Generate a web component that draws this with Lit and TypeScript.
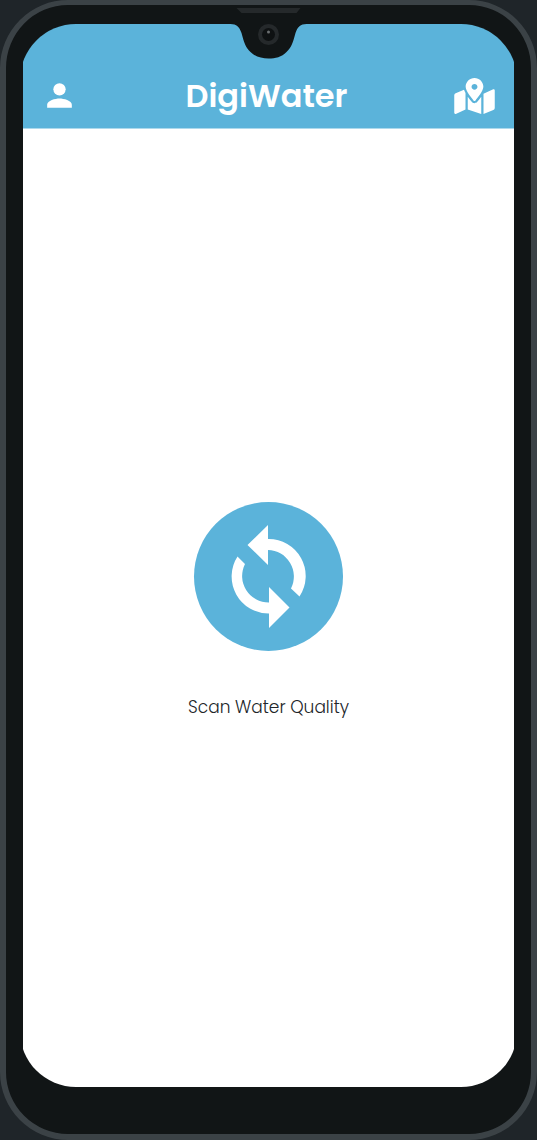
import { LitElement, html, css } from "lit";
import { customElement } from "lit/decorators.js";

@customElement("app-root")
export class AppRoot extends LitElement {
  static styles = css`
    :host {
      display: block;
      min-height: 100vh;
      background: #1f2529;
      font-family: Poppins, Inter, sans-serif;
    }
    * {
      box-sizing: border-box;
    }
    .phone {
      position: relative;
      display: flex;
      min-height: 100vh;
      padding: 19px 17px 47px;
      border: 6px solid #3b4246;
      border-top-width: 5px;
      border-radius: 68px;
      background: #111516;
    }
    .window {
      display: flex;
      flex: 1;
      overflow: hidden;
    }
    .screen {
      display: flex;
      flex: 1;
      flex-direction: column;
      margin: 0 -3px;
      padding: 0 3px;
      overflow: hidden;
      border-radius: 56px;
      background: linear-gradient(#5bb3da 104px, #ffffff 105px);
    }
    .bar {
      display: grid;
      grid-template-columns: 48px 1fr 48px;
      align-items: center;
      height: 104px;
      padding: 40px 16px 0;
      color: #ffffff;
    }
    .title {
      margin: 0;
      padding-right: 4px;
      font-size: 32px;
      font-weight: 600;
      line-height: 48px;
      text-align: center;
    }
    button {
      display: flex;
      align-items: center;
      justify-content: center;
      padding: 0;
      border: 0;
      background: none;
      color: inherit;
      font: inherit;
      cursor: pointer;
    }
    svg {
      display: block;
      fill: currentColor;
    }
    .profile {
      width: 41px;
      height: 50px;
      padding-bottom: 2px;
    }
    .map {
      width: 48px;
      height: 48px;
    }
    .main {
      display: flex;
      flex: 1;
      flex-direction: column;
      align-items: center;
      justify-content: center;
      gap: 44px;
      padding-top: 6px;
    }
    .scan {
      width: 149px;
      height: 149px;
      border-radius: 50%;
      background: #5bb3da;
      color: #ffffff;
    }
    .caption {
      margin: 0;
      color: #212529;
      font-size: 17px;
      font-weight: 300;
      line-height: 24px;
    }
    .notch {
      position: absolute;
      top: 0;
      left: 50%;
      transform: translateX(-50%);
    }
  `;

  render() {
    return html`
      <div class="phone">
        <div class="window">
          <div class="screen">
            <header class="bar">
              <button class="profile" type="button" aria-label="Profile">
                <svg width="37" height="37" viewBox="0 0 24 24">
                  <circle cx="12" cy="8" r="4" />
                  <path d="M12 14c-2.670 0-8 1.340-8 4v2h16v-2c0-2.660-5.330-4-8-4z" />
                </svg>
              </button>
              <h1 class="title">DigiWater</h1>
              <button class="map" type="button" aria-label="Map">
                <svg width="41" height="36" viewBox="0 0 576 512">
                  <path
                    d="M288 0c-69.590 0-126 56.410-126 126 0 56.260 82.350 158.800 113.900 196.020 6.390 7.540 17.820 7.540 24.200 0C331.650 284.800 414 182.260 414 126 414 56.410 357.590 0 288 0zm0 168c-23.200 0-42-18.800-42-42s18.800-42 42-42 42 18.800 42 42-18.800 42-42 42zM20.120 215.950A32.006 32.006 0 0 0 0 245.660v250.320c0 11.320 11.430 19.060 21.940 14.860L160 448V214.920c-8.840-15.980-16.070-31.540-21.250-46.420L20.120 215.950zM288 359.670c-14.070 0-27.380-6.180-36.510-16.960-19.660-23.200-40.570-49.620-59.490-76.720v182l192 64V266c-18.920 27.090-39.820 53.520-59.490 76.720-9.130 10.770-22.440 16.950-36.510 16.950zm266.060-198.510L416 224v288l139.880-55.950A31.996 31.996 0 0 0 576 426.340V176.020c0-11.320-11.430-19.060-21.940-14.860z"
                  />
                </svg>
              </button>
            </header>
            <main class="main">
              <button class="scan" type="button" aria-labelledby="scan-caption">
                <svg width="149" height="149" viewBox="-74.500 -74.500 149 149">
                  <path
                    d="M-0.500-51.500L-21-31.500L-0.500-11.500V-26.500A26.500 26.500 0 0 1 22.500 12L31 20A37 37 0 0 0-0.500-37.500z"
                  />
                  <path
                    d="M0.500 51.500L21 31L0.500 10.500V26A26.500 26.500 0 0 1-23.500-12.500L-31-20A37 37 0 0 0 0.500 37z"
                  />
                </svg>
              </button>
              <p class="caption" id="scan-caption">Scan Water Quality</p>
            </main>
          </div>
        </div>
        <svg class="notch" width="77" height="54" viewBox="0 0 77 54" aria-hidden="true">
          <path
            fill="#111516"
            d="M0 18V19C6 19 9 22 11 28C14 39 15 42 20 47C25 52 31 53.500 38 53.500S51 52 56 47C61 42 62 39 65 28C67 22 70 19 76 19V18z"
          />
          <path fill="#25292b" d="M6 3H70L66 8H11z" />
          <circle cx="38" cy="29.500" r="10.500" fill="#25292b" />
          <circle cx="38" cy="29.500" r="6.500" fill="#0e1112" />
          <circle cx="38" cy="27" r="1.500" fill="#6b6f71" />
        </svg>
      </div>
    `;
  }
}
